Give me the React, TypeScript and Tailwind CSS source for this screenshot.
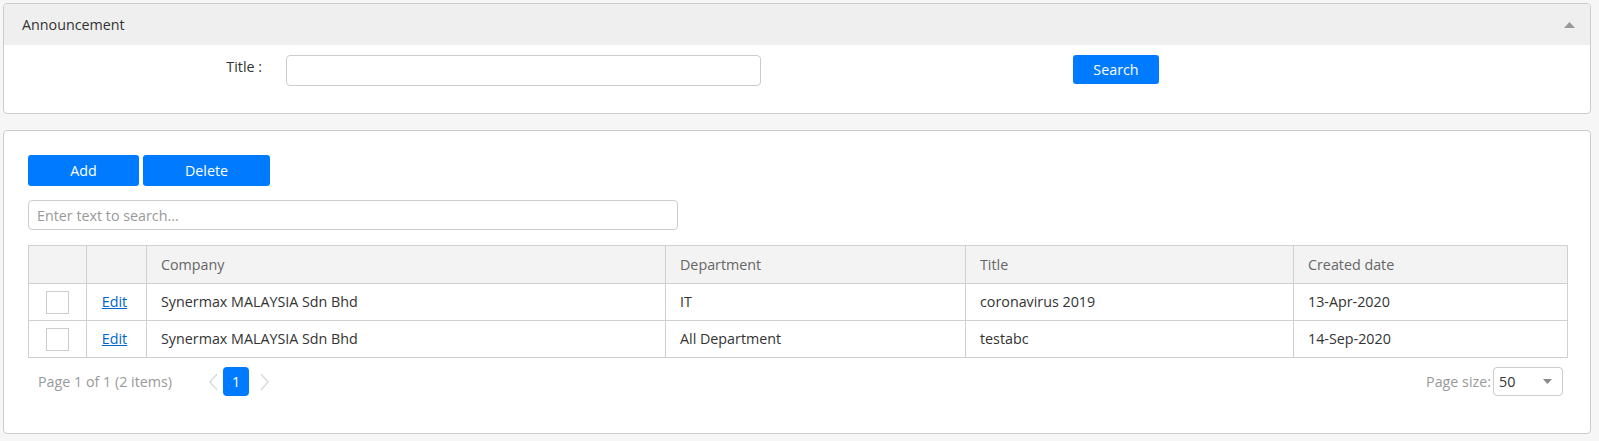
import React from "react";

const font = { fontFamily: '"Open Sans", "Noto Sans", sans-serif' };

const rows = [
  { company: "Synermax MALAYSIA Sdn Bhd", dept: "IT", title: "coronavirus 2019", date: "13-Apr-2020" },
  { company: "Synermax MALAYSIA Sdn Bhd", dept: "All Department", title: "testabc", date: "14-Sep-2020" },
];

export default function App() {
  return (
    <div
      className="min-h-[441px] bg-[#f6f6f6] pt-[3px] pl-[3px] pr-[8px] text-[14.3px] text-[#333]"
      style={font}
    >
      {/* Panel 1 */}
      <div className="rounded-[4px] border border-[#cccccc] bg-white overflow-hidden">
        <div className="flex h-[41px] items-center justify-between bg-[#efefef] pl-[18px] pr-[15px]">
          <span className="text-[#333]">Announcement</span>
          <svg width="11" height="6" viewBox="0 0 11 6">
            <polygon points="0,6 11,6 5.5,0" fill="#999" />
          </svg>
        </div>
        <div className="flex h-[68px] items-start pt-[10px]">
          <div className="w-[258px] pt-[1px] text-right text-[#333]">Title :</div>
          <input
            className="ml-[24px] h-[31px] w-[475px] rounded-[4px] border border-[#cccccc] bg-white px-2 outline-none"
          />
          <button className="ml-[312px] h-[29px] w-[86px] rounded-[3px] bg-[#007bff] text-white">
            Search
          </button>
        </div>
      </div>

      {/* Panel 2 */}
      <div className="mt-[16px] rounded-[4px] border border-[#cccccc] bg-white pl-[24px] pr-[23px] pt-[24px] pb-[37px]">
        <div className="flex gap-[4px]">
          <button className="h-[31px] w-[111px] rounded-[3px] bg-[#007bff] text-white">Add</button>
          <button className="h-[31px] w-[127px] rounded-[3px] bg-[#007bff] text-white">Delete</button>
        </div>
        <input
          className="mt-[14px] h-[30px] w-[650px] rounded-[4px] border border-[#cccccc] px-[8px] outline-none placeholder:text-[#999]"
          placeholder="Enter text to search..."
        />
        <table className="mt-[15px] w-[1539px] table-fixed border-collapse border border-[#d0d0d0]">
          <colgroup>
            <col className="w-[58px]" />
            <col className="w-[60px]" />
            <col className="w-[519px]" />
            <col className="w-[300px]" />
            <col className="w-[328px]" />
            <col className="w-[274px]" />
          </colgroup>
          <thead>
            <tr className="h-[38px] bg-[#f3f3f3] text-left text-[#666]">
              <th className="border border-[#d0d0d0] font-normal"></th>
              <th className="border border-[#d0d0d0] font-normal"></th>
              <th className="border border-[#d0d0d0] pl-[14px] font-normal">Company</th>
              <th className="border border-[#d0d0d0] pl-[14px] font-normal">Department</th>
              <th className="border border-[#d0d0d0] pl-[14px] font-normal">Title</th>
              <th className="border border-[#d0d0d0] pl-[14px] font-normal">Created date</th>
            </tr>
          </thead>
          <tbody>
            {rows.map((r, i) => (
              <tr key={i} className="h-[37px]">
                <td className="border border-[#d0d0d0]">
                  <div className="mx-auto h-[23px] w-[23px] border border-[#cccccc] bg-white" />
                </td>
                <td className="border border-[#d0d0d0] pr-[4px] text-center">
                  <a href="#" className="text-[#0066cc] underline">Edit</a>
                </td>
                <td className="border border-[#d0d0d0] pl-[14px]">{r.company}</td>
                <td className="border border-[#d0d0d0] pl-[14px]">{r.dept}</td>
                <td className="border border-[#d0d0d0] pl-[14px]">{r.title}</td>
                <td className="border border-[#d0d0d0] pl-[14px]">{r.date}</td>
              </tr>
            ))}
          </tbody>
        </table>
        <div className="mt-[9px] flex h-[29px] items-center justify-between">
          <div className="flex items-center">
            <span className="ml-[10px] text-[#999]">Page 1 of 1 (2 items)</span>
            <svg className="ml-[37px]" width="9" height="18" viewBox="0 0 9 18">
              <polyline points="8,1 1,9 8,17" fill="none" stroke="#dcdcdc" strokeWidth="1.5" />
            </svg>
            <div className="ml-[5px] flex h-[29px] w-[26px] items-center justify-center rounded-[4px] bg-[#007bff] text-white">
              1
            </div>
            <svg className="ml-[11px]" width="9" height="18" viewBox="0 0 9 18">
              <polyline points="1,1 8,9 1,17" fill="none" stroke="#dcdcdc" strokeWidth="1.5" />
            </svg>
          </div>
          <div className="mr-[4px] flex items-center">
            <span className="text-[#999]">Page size:</span>
            <div className="ml-[2px] flex h-[29px] w-[70px] items-center justify-between rounded-[4px] border border-[#cccccc] pl-[5px] pr-[10px]">
              <span className="text-[#333]">50</span>
              <svg width="9" height="5" viewBox="0 0 9 5">
                <polygon points="0,0 9,0 4.5,5" fill="#888" />
              </svg>
            </div>
          </div>
        </div>
      </div>
    </div>
  );
}
